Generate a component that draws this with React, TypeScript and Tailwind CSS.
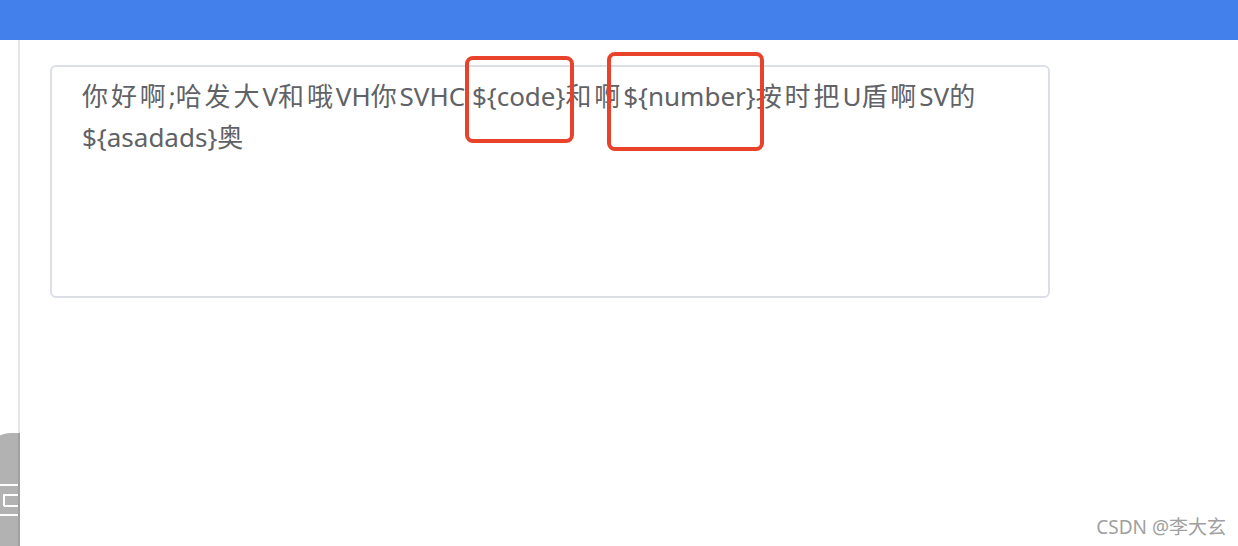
import React from "react";

const parts: { t: string; cjk: boolean }[] = [
  { t: "你好啊", cjk: true },
  { t: ";", cjk: false },
  { t: "哈发大", cjk: true },
  { t: "V", cjk: false },
  { t: "和哦", cjk: true },
  { t: "VH", cjk: false },
  { t: "你", cjk: true },
  { t: "SVHC ${code}", cjk: false },
  { t: "和啊", cjk: true },
  { t: "${number}", cjk: false },
  { t: "按时把", cjk: true },
  { t: "U", cjk: false },
  { t: "盾啊", cjk: true },
  { t: "SV", cjk: false },
  { t: "的", cjk: true },
  { t: "${asadads}", cjk: false },
  { t: "奥", cjk: true },
];

export default function App() {
  return (
    <div
      className="relative w-[1238px] h-[546px] overflow-hidden bg-white"
      style={{ fontFamily: '"Noto Sans", "Noto Sans CJK SC", sans-serif' }}
    >
      <div className="h-[40px] w-full bg-[#4380ec]" />
      <div className="flex h-[506px]">
        <div className="w-[18px] shrink-0" />
        <div className="w-[2px] shrink-0 bg-[#e6e6e6]" />
        <div className="flex-1 pl-[30px] pt-[25px]">
          <div className="w-[1000px] h-[233px] rounded-[6px] border-2 border-[#dcdfe6] pl-[30px] pr-[20px] pt-[9px] text-[26px] leading-[41px] text-[#606266]">
            {parts.map((p, i) =>
              p.cjk ? (
                <span key={i} className="tracking-[2.9px]">
                  {p.t}
                </span>
              ) : (
                <span key={i}>{p.t}</span>
              )
            )}
          </div>
        </div>
      </div>

      {/* annotation boxes */}
      <div className="absolute left-[465px] top-[56px] w-[109px] h-[87px] rounded-[8px] border-4 border-[#e8432a]" />
      <div className="absolute left-[607px] top-[52px] w-[157px] h-[99px] rounded-[8px] border-4 border-[#e8432a]" />

      {/* left floating tab */}
      <div className="absolute left-[-12px] top-[433px] w-[32px] h-[130px] rounded-tl-[22px] bg-black/30">
        <svg className="absolute left-[12px] top-[50px]" width="20" height="36" viewBox="0 0 20 36">
          <rect x="0" y="1" width="18" height="2" fill="#fff" />
          <rect x="4" y="11" width="14" height="2" fill="#fff" />
          <rect x="3" y="11" width="2" height="12" fill="#fff" />
          <rect x="4" y="22" width="14" height="2" fill="#fff" />
          <rect x="0" y="31" width="18" height="2" fill="#fff" />
        </svg>
      </div>

      <div className="absolute right-[12px] top-[515px] text-[19px] leading-[24px] text-[#a0a0a0]">
        CSDN @李大玄
      </div>
    </div>
  );
}
